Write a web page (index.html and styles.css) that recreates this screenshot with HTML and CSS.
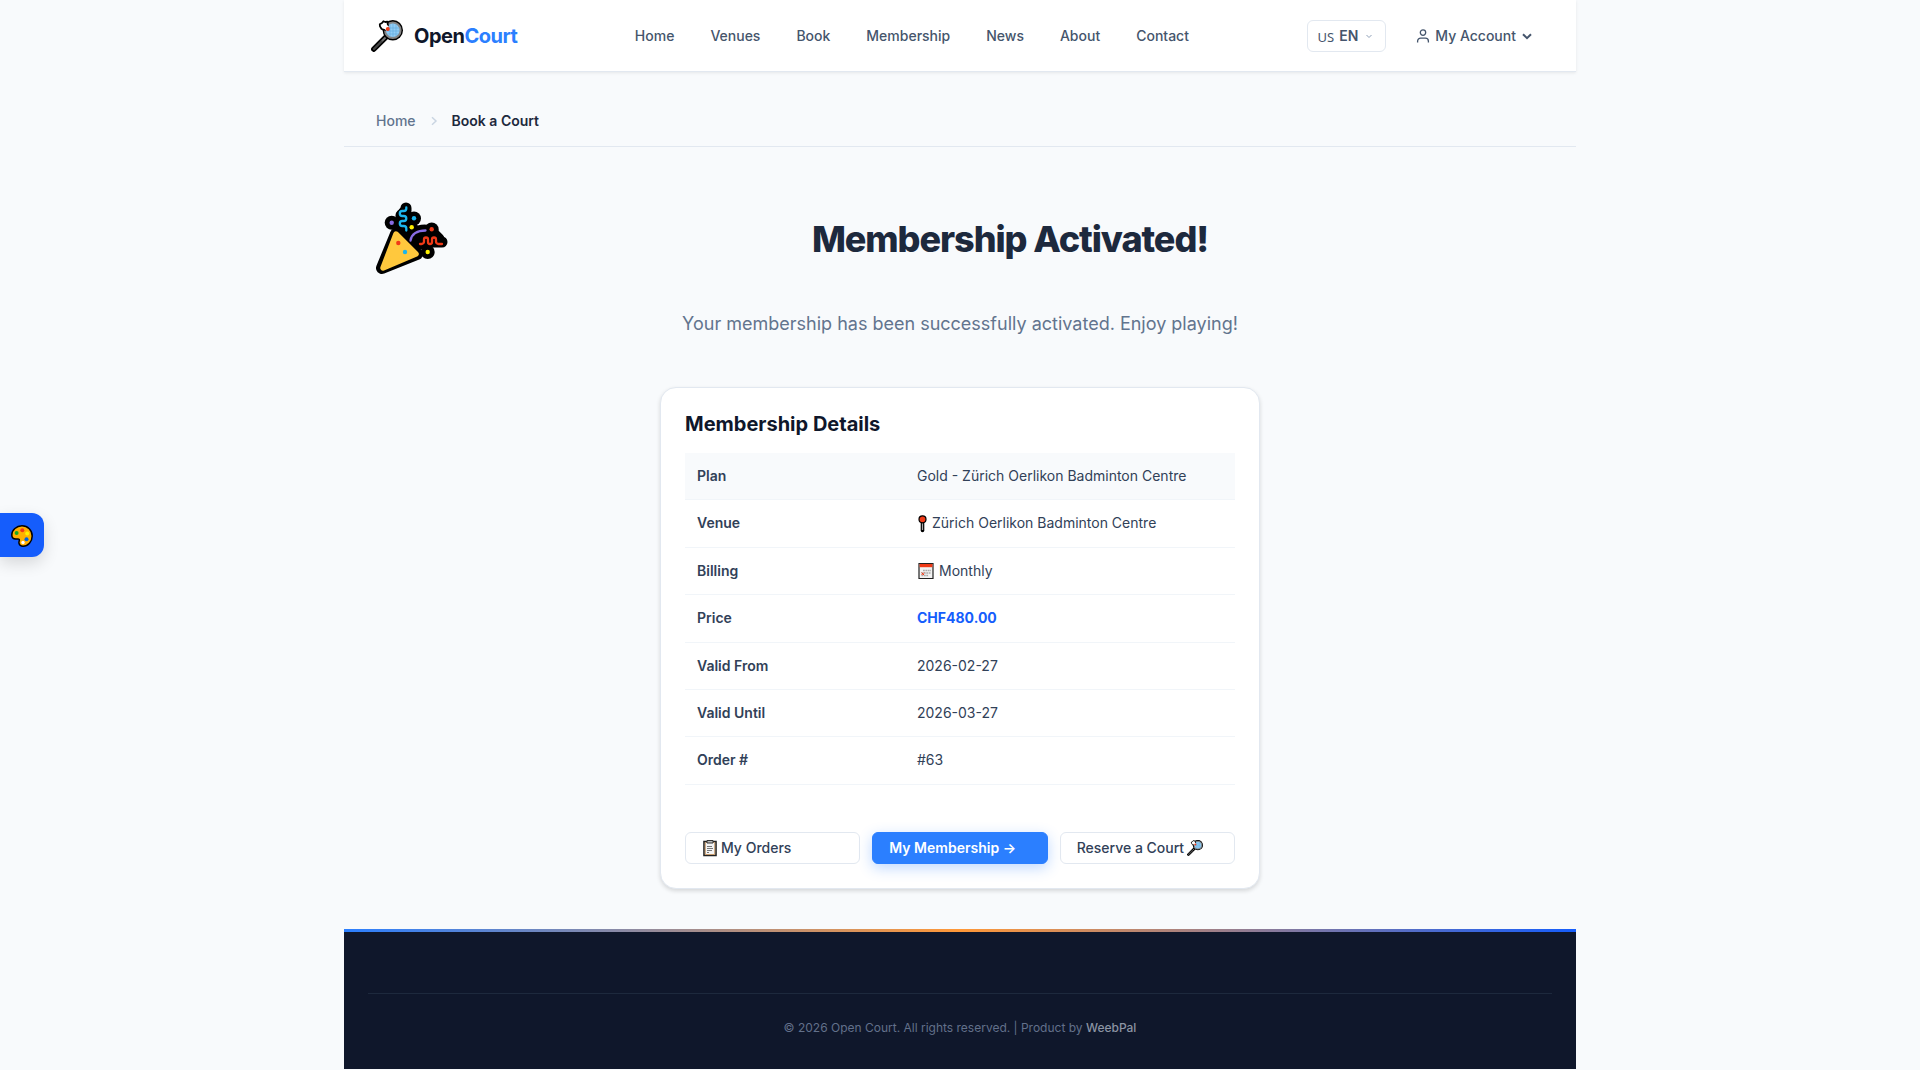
FILE: index.html
```html
<!DOCTYPE html>
<html lang="en">

<head>
    <meta charset="UTF-8">
    <meta name="viewport" content="width=device-width, initial-scale=1.0">
    <title>Open Court</title>
    <link rel="stylesheet" href="styles.css">
</head>

<body>
    <!-- shared icons -->
    <svg class="sprite" aria-hidden="true">
        <symbol id="racket" viewBox="0 0 32 32">
            <path d="M15 17 2.8 29.2" stroke="#000" stroke-width="5.4" stroke-linecap="round" />
            <circle cx="21.8" cy="10.3" r="10.2" fill="#000" />
            <path d="M14.5 17.5 10.5 21.5" stroke="#777" stroke-width="2" />
            <path d="M10.5 21.5 3 29" stroke="#444" stroke-width="2.4" stroke-linecap="round" />
            <circle cx="21.8" cy="10.3" r="7.8" fill="#92cdf5" stroke="#858585" stroke-width="2" />
            <path d="M19 4v13M22 3.5v13.6M25 4v12.5M15.5 8h12.8M15 11h13.6M16 14h11.8" stroke="#5fa9dc" stroke-width=".6" />
            <path d="M8.8 4.2 11 3l1.4-1.8 1.8.8 2.2-.4.6 5-3 3.4-3.4-1-1.6-2.6z" fill="#fff" stroke="#000" stroke-width="1.8" stroke-linejoin="round" />
            <path d="m12 4.5 4.5 4" stroke="#fff" stroke-width="4.5" />
            <circle cx="16.8" cy="9" r="2" fill="#f03a17" />
        </symbol>
    </svg>

    <div class="page">
        <header class="header">
            <a class="logo" href="#">
                <svg class="logo-icon" aria-hidden="true"><use href="#racket" /></svg>
                <span>Open<span class="logo-accent">Court</span></span>
            </a>
            <nav class="nav" aria-label="Main">
                <a href="#">Home</a>
                <a href="#">Venues</a>
                <a href="#">Book</a>
                <a href="#">Membership</a>
                <a href="#">News</a>
                <a href="#">About</a>
                <a href="#">Contact</a>
            </nav>
            <div class="actions">
                <button class="lang" type="button" aria-haspopup="true">
                    <span class="lang-flag">US</span>
                    <span>EN</span>
                    <svg class="lang-arrow" viewBox="0 0 12 12" aria-hidden="true"><path d="m3.5 5 2.5 2.5L8.5 5" /></svg>
                </button>
                <button class="account" type="button" aria-haspopup="true">
                    <svg class="account-icon" viewBox="0 0 14 14" aria-hidden="true">
                        <circle cx="7" cy="3.6" r="2.7" />
                        <path d="M1.6 13.4v-1.2a3 3 0 0 1 3-3h4.8a3 3 0 0 1 3 3v1.2" />
                    </svg>
                    <span>My Account</span>
                    <svg class="account-arrow" viewBox="0 0 10 10" aria-hidden="true"><path d="m1 3.2 4 4 4-4" /></svg>
                </button>
            </div>
        </header>

        <nav class="breadcrumb" aria-label="Breadcrumb">
            <a href="#">Home</a>
            <svg class="breadcrumb-sep" viewBox="0 0 8 10" aria-hidden="true"><path d="m2 1.2 4 3.8-4 3.8" /></svg>
            <span class="breadcrumb-current">Book a Court</span>
        </nav>

        <main class="main">
            <div class="hero">
                <svg class="popper" viewBox="0 1 72 72" aria-hidden="true">
                    <g fill="none" stroke="#000" stroke-width="11" stroke-linecap="round" stroke-linejoin="round">
                        <path d="M30 6v3l-5 4v12l5 8" />
                        <path d="M28 10v20M43 40h23M48 36h13" />
                        <path d="M34 40c1-8 7-12 15-12" />
                        <path d="M43 36 55 29l8 8z" fill="#000" />
                        <path d="M30 20h6M20 32l4-5M40 44l9-5" />
                        <path d="M20 32 41 52 6 66z" fill="#000" stroke-width="12" />
                    </g>
                    <g fill="#000">
                        <circle cx="15.7" cy="20.7" r="7" />
                        <circle cx="38" cy="16.5" r="7" />
                        <circle cx="35.5" cy="25.5" r="6.5" />
                        <circle cx="55.7" cy="27.5" r="7" />
                        <circle cx="51.7" cy="50" r="7" />
                    </g>
                    <path d="M20 32 40 52 7 66z" fill="#ffc83d" stroke="#ffc83d" stroke-width="5.5" stroke-linejoin="round" />
                    <g fill="none" stroke-width="2.3" stroke-linecap="round">
                        <path d="M30.3 5.5v1a2.5 2.5 0 0 1-2.5 2.5h-1.5a2.5 2.5 0 0 0 0 5h1.5a2.5 2.5 0 0 1 0 5h-1.5a2.5 2.5 0 0 0 0 5h1.5a2.5 2.5 0 0 1 2.5 2.5v2" stroke="#1cb5ed" />
                        <path d="M44 42h1.5a2.5 2.5 0 0 0 2.5-2.5v-2a2 2 0 0 1 4 0v2.5a2 2 0 0 0 4 0v-2.5a2 2 0 0 1 4 0v2a2.5 2.5 0 0 0 2.5 2.5H66" stroke="#f03a17" />
                        <path d="M34.5 38.5c1-6.5 7-10 15-10" stroke="#886ce4" />
                    </g>
                    <circle cx="15.7" cy="20.7" r="2.2" fill="#886ce4" />
                    <circle cx="38" cy="16.3" r="2.2" fill="#1cb5ed" />
                    <circle cx="35.7" cy="25.3" r="2.2" fill="#fff100" />
                    <circle cx="55.7" cy="27.3" r="2.2" fill="#f03a17" />
                    <circle cx="51.7" cy="50" r="2.2" fill="#fff100" />
                    <circle cx="22.3" cy="41" r="2.2" fill="#f03a17" />
                    <circle cx="29" cy="50" r="2.2" fill="#1cb5ed" />
                </svg>
                <h1>Membership Activated!</h1>
            </div>
            <p class="subtitle">Your membership has been successfully activated. Enjoy playing!</p>

            <section class="card">
                <h2>Membership Details</h2>
                <table class="details">
                    <tbody>
                        <tr>
                            <th scope="row">Plan</th>
                            <td>Gold - Zürich Oerlikon Badminton Centre</td>
                        </tr>
                        <tr>
                            <th scope="row">Venue</th>
                            <td>
                                <span class="with-icon">
                                    <svg class="pin" viewBox="0 0 11 18" aria-hidden="true">
                                        <path d="M5.5 8.5v7" stroke="#000" stroke-width="3.6" stroke-linecap="round" />
                                        <path d="M5.5 7.500v7.500" stroke="#aaa" stroke-width="1.2" />
                                        <circle cx="5.5" cy="4.3" r="3.5" fill="#f03a17" stroke="#000" stroke-width="1.2" />
                                    </svg>
                                    Zürich Oerlikon Badminton Centre
                                </span>
                            </td>
                        </tr>
                        <tr>
                            <th scope="row">Billing</th>
                            <td>
                                <span class="with-icon">
                                    <svg class="calendar" viewBox="0 0 18 18" aria-hidden="true">
                                        <path d="M2 1.5h14v15H2z" fill="#f2f2f2" stroke="#222" stroke-width="1.2" />
                                        <path d="M2.6 2h12.8v3.2H2.6z" fill="#f03a17" />
                                        <path d="M6 8.5h8M4.5 11h9.5M4.5 13.5h7" stroke="#aaa" stroke-width="1.7" stroke-dasharray="1.8 .6" />
                                        <path d="m4.5 10.5 2.5 2.5m0-2.5-2.5 2.5" stroke="#f03a17" />
                                    </svg>
                                    Monthly
                                </span>
                            </td>
                        </tr>
                        <tr>
                            <th scope="row">Price</th>
                            <td class="price">CHF480.00</td>
                        </tr>
                        <tr>
                            <th scope="row">Valid From</th>
                            <td>2026-02-27</td>
                        </tr>
                        <tr>
                            <th scope="row">Valid Until</th>
                            <td>2026-03-27</td>
                        </tr>
                        <tr>
                            <th scope="row">Order #</th>
                            <td>#63</td>
                        </tr>
                    </tbody>
                </table>
                <div class="buttons">
                    <a class="btn" href="#">
                        <svg class="btn-icon" viewBox="0 0 16 18" aria-hidden="true">
                            <path d="M2 2.5h12v14H2z" fill="#f4f4f4" stroke="#222" stroke-width="1.6" />
                            <path d="M3.3 3.5h9.4v12H3.3z" fill="none" stroke="#c69a6b" />
                            <path d="M5 1.5h6v2.5H5z" fill="#bbb" stroke="#333" />
                            <path d="M5 7.5h5M5 9.5h6M5 11.5h5M5 13.5h2" stroke="#777" />
                        </svg>
                        My Orders
                    </a>
                    <a class="btn btn-primary" href="#">My Membership →</a>
                    <a class="btn" href="#">
                        Reserve a Court
                        <svg class="btn-icon" aria-hidden="true"><use href="#racket" /></svg>
                    </a>
                </div>
            </section>
        </main>

        <footer class="footer">
            <p>© 2026 Open Court. All rights reserved. | Product by <a href="#">WeebPal</a></p>
        </footer>
    </div>

    <button class="theme-toggle" type="button" aria-label="Theme colors">
        <svg viewBox="0 0 22 22" aria-hidden="true">
            <path d="M11 .8C5.5.8.8 5 .8 10c0 2.500 1.800 4 4 4 1.700 0 3-.5 3.500.5s-.8 2-.3 3.800c.4 1.700 2 2.900 4 2.900 5 0 9.200-4.500 9.200-10.200C21.200 5.200 16.800.8 11 .8z" fill="#ffb000" stroke="#000" stroke-width="1.5" />
            <circle cx="5.6" cy="8" r="2" fill="#16a826" />
            <circle cx="11.3" cy="5.2" r="2" fill="#f03a17" />
            <circle cx="16.2" cy="8.6" r="2" fill="#fff100" />
            <circle cx="15.5" cy="14.3" r="2" fill="#0063e0" />
            <circle cx="12" cy="17.5" r="1.7" fill="#fff" />
        </svg>
    </button>
</body>

</html>
```

FILE: styles.css
```css
* {
    margin: 0;
    padding: 0;
    box-sizing: border-box;
}

body {
    background-color: #f8fafc;
    color: #314158;
    font: 14px/22px Inter, "Noto Sans", sans-serif;
}

a {
    color: inherit;
    text-decoration: none;
}

button {
    font: inherit;
    color: inherit;
    background: none;
    border: none;
    cursor: pointer;
}

.sprite {
    display: none;
}

.page {
    max-width: 1232px;
    margin: 0 auto;
}

/* header */
.header {
    display: flex;
    align-items: center;
    justify-content: space-between;
    height: 72px;
    padding: 0 36px 0 27px;
    background-color: #fff;
    border-bottom: 1px solid #e2e8f0;
    box-shadow: 0 1px 3px rgba(0, 0, 0, .08);
    color: #45556c;
    font-weight: 500;
}

.logo {
    display: flex;
    align-items: center;
    gap: 11px;
    color: #0f172b;
    font-size: 20px;
    font-weight: 700;
    letter-spacing: -0.025em;
}

.logo-icon {
    width: 32px;
    height: 32px;
}

.logo-accent {
    color: #2b7fff;
}

.nav {
    display: flex;
    gap: 36px;
}

.actions {
    display: flex;
    align-items: center;
    gap: 22px;
}

.lang {
    display: flex;
    align-items: center;
    gap: 5px;
    height: 32px;
    padding: 0 10px;
    border: 1px solid #e2e8f0;
    border-radius: 6px;
    font-weight: 600;
}

.lang-flag {
    font: 13px/22px "Noto Sans", sans-serif;
    padding-top: 2px;
}

.lang-arrow {
    width: 12px;
    height: 12px;
    fill: none;
    stroke: #90a1b9;
}

.account {
    display: flex;
    align-items: center;
    gap: 5px;
    padding: 0 8px;
    font-weight: 500;
}

.account-icon {
    width: 14px;
    height: 14px;
    fill: none;
    stroke: currentColor;
    stroke-width: 1.3;
}

.account-arrow {
    width: 10px;
    height: 10px;
    margin-left: 1px;
    fill: none;
    stroke: currentColor;
    stroke-width: 2;
}

/* breadcrumb */
.breadcrumb {
    display: flex;
    align-items: center;
    gap: 14px;
    padding: 38px 32px 14px;
    border-bottom: 1px solid #e2e8f0;
    color: #62748e;
    font-weight: 500;
}

.breadcrumb-sep {
    width: 8px;
    height: 10px;
    fill: none;
    stroke: #cad5e2;
    stroke-width: 1.5;
}

.breadcrumb-current {
    color: #1d293d;
    font-weight: 600;
}

/* content */
.main {
    padding: 56px 32px 40px;
}

.hero {
    display: flex;
    align-items: center;
    gap: 28px;
}

.popper {
    flex: none;
    width: 72px;
    height: 72px;
    overflow: visible;
}

.hero h1 {
    flex: 1;
    color: #1d293d;
    font-size: 36px;
    line-height: 44px;
    font-weight: 800;
    letter-spacing: -0.03em;
    text-align: center;
}

.subtitle {
    margin: 34px 0 48px;
    color: #62748e;
    font-size: 18px;
    line-height: 30px;
    text-align: center;
}

.card {
    max-width: 600px;
    margin: 0 auto;
    padding: 24px;
    background-color: #fff;
    border: 1px solid #e2e8f0;
    border-radius: 16px;
    box-shadow: 0 2px 4px rgba(0, 0, 0, .14);
}

.card h2 {
    margin-bottom: 17px;
    color: #0f172b;
    font-size: 20px;
    line-height: 24px;
    font-weight: 700;
}

.details {
    width: 100%;
    border-collapse: collapse;
    line-height: 1.6;
}

.details th,
.details td {
    padding: 12px;
    border-bottom: 1px solid #f1f5f9;
    text-align: left;
}

.details th {
    width: 40%;
    font-weight: 600;
}

.details tr:first-child {
    background-color: #f8fafc;
}

.details .price {
    color: #155dfc;
    font-weight: 700;
}

.with-icon {
    display: flex;
    align-items: center;
    gap: 4px;
}

.pin {
    width: 11px;
    height: 18px;
}

.calendar {
    width: 18px;
    height: 18px;
}

.buttons {
    display: grid;
    grid-template-columns: repeat(3, 1fr);
    gap: 12px;
    margin-top: 47px;
}

.btn {
    display: flex;
    align-items: center;
    gap: 3px;
    height: 32px;
    padding: 0 16px;
    border: 1px solid #e2e8f0;
    border-radius: 6px;
    font-weight: 500;
}

.btn-primary {
    background-color: #2b7fff;
    border-color: #2b7fff;
    box-shadow: 0 4px 14px rgba(43, 127, 255, .3);
    color: #fff;
    font-weight: 600;
}

.btn-icon {
    width: 16px;
    height: 18px;
}

/* footer */
.footer {
    padding: 61px 24px 30px;
    background-color: #0f172b;
    border-top: 3px solid;
    border-image: linear-gradient(90deg, #2b7fff, #ff9838, #155dfc) 1;
    color: #62708a;
    font-size: 12px;
    text-align: center;
}

.footer p {
    padding-top: 23px;
    border-top: 1px solid #1d293d;
}

.footer a {
    color: #8b94a3;
    font-weight: 500;
}

/* floating palette button */
.theme-toggle {
    position: fixed;
    top: 513px;
    left: 0;
    width: 44px;
    height: 44px;
    padding-top: 2px;
    background-color: #155dfc;
    border-radius: 0 12px 12px 0;
    box-shadow: 0 6px 16px rgba(0, 0, 0, .14);
}

.theme-toggle svg {
    display: block;
    width: 22px;
    height: 22px;
    margin: 0 auto;
}
```
